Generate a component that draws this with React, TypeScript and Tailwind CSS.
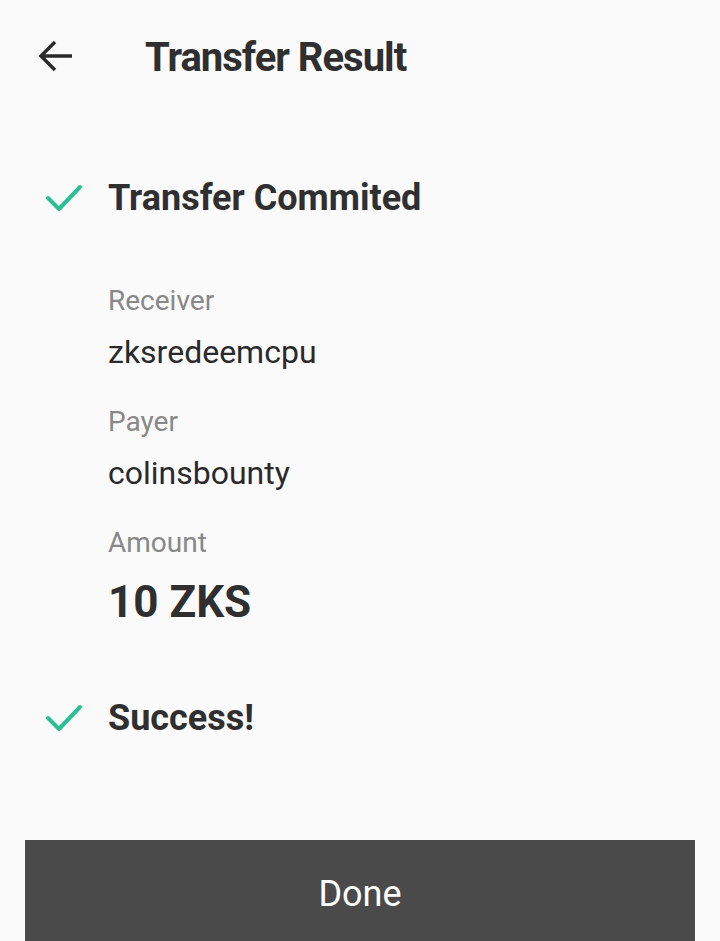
import React from "react";

function Check() {
  return (
    <svg width="36" height="30" viewBox="0 0 36 30" fill="none">
      <path d="M2 15 L13 26 L34 4" stroke="#2dbf94" strokeWidth="4" strokeLinecap="round" strokeLinejoin="round" />
    </svg>
  );
}

function BackArrow() {
  return (
    <svg width="34" height="32" viewBox="0 0 34 32" fill="none">
      <path d="M33 16 H3 M16 2 L2 16 L16 30" stroke="#2b2b2b" strokeWidth="3.5" strokeLinejoin="miter" />
    </svg>
  );
}

function Field({ label, value, big }: { label: string; value: string; big?: boolean }) {
  return (
    <div className="flex flex-col">
      <div className="text-[28px] leading-[34px] text-[#888888]">{label}</div>
      <div
        className={
          big
            ? "mt-[16px] text-[44px] leading-[52px] font-bold text-[#2f2f2f]"
            : "mt-[16px] text-[32px] leading-[36px] text-[#2a2a2a]"
        }
      >
        {value}
      </div>
    </div>
  );
}

export default function App() {
  return (
    <div
      className="w-[720px] h-[941px] bg-[#fafafa] flex flex-col overflow-hidden"
      style={{ fontFamily: "Roboto, 'Noto Sans', sans-serif" }}
    >
      <div className="h-[112px] flex items-center pl-[39px]">
        <BackArrow />
        <h1 className="ml-[72px] pt-[4px] text-[40px] font-bold text-[#2f2f2f] tracking-[-1px]">Transfer Result</h1>
      </div>

      <div className="mt-[56px] flex items-center h-[60px] pl-[46px]">
        <Check />
        <span className="ml-[26px] text-[36px] font-bold text-[#2f2f2f]">Transfer Commited</span>
      </div>

      <div className="pl-[108px] mt-[56px] flex flex-col gap-[35px]">
        <Field label="Receiver" value="zksredeemcpu" />
        <Field label="Payer" value="colinsbounty" />
        <Field label="Amount" value="10 ZKS" big />
      </div>

      <div className="mt-[60px] flex items-center h-[60px] pl-[46px]">
        <Check />
        <span className="ml-[26px] text-[36px] font-bold text-[#2f2f2f]">Success!</span>
      </div>

      <div className="mt-auto mx-[25px] h-[101px] pt-[6px] bg-[#4a4a4a] flex items-center justify-center">
        <span className="text-white text-[36px]">Done</span>
      </div>
    </div>
  );
}
